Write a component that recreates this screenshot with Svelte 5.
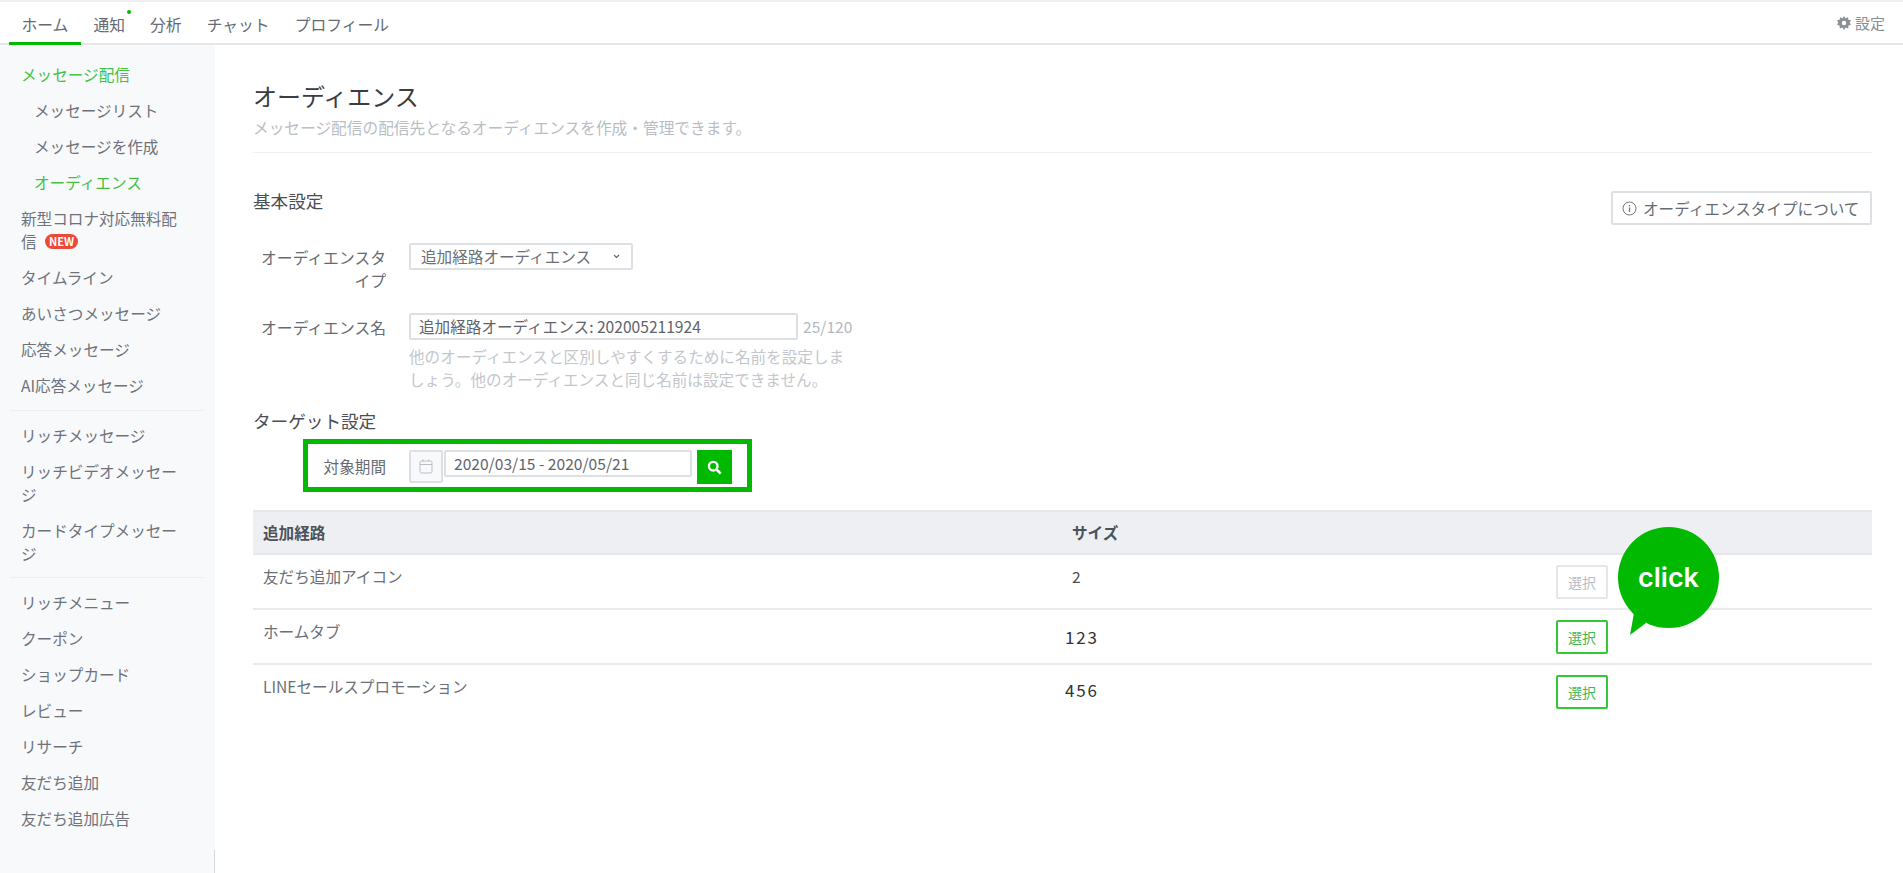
<script>
  const tabs = ["ホーム", "通知", "分析", "チャット", "プロフィール"];
  const navTop = [
    { label: "メッセージ配信", on: true },
    { label: "メッセージリスト", sub: true },
    { label: "メッセージを作成", sub: true },
    { label: "オーディエンス", sub: true, on: true },
    { label: "新型コロナ対応無料配信", badge: true },
    { label: "タイムライン" },
    { label: "あいさつメッセージ" },
    { label: "応答メッセージ" },
    { label: "AI応答メッセージ" }
  ];
  const navMid = ["リッチメッセージ", "リッチビデオメッセージ", "カードタイプメッセージ"];
  const navEnd = ["リッチメニュー", "クーポン", "ショップカード", "レビュー", "リサーチ", "友だち追加", "友だち追加広告"];
  const rows = [
    { name: "友だち追加アイコン", size: "2", off: true },
    { name: "ホームタブ", size: "123", edited: true },
    { name: "LINEセールスプロモーション", size: "456", edited: true, low: true }
  ];
</script>

<div class="page">
  <header class="top">
    <nav class="tabs">
      {#each tabs as tab, i}
        <span class="tab" class:active={i === 0}>
          {tab}
          {#if i === 1}<i class="dot"></i>{/if}
        </span>
      {/each}
    </nav>
    <span class="settings">
      <svg width="14" height="14" viewBox="0 0 14 14">
        <path fill="#8b9097" fill-rule="evenodd" d="M7 0l1.4 2.2L11 1.2l.3 2.6 2.7.4-1.3 2.3L14 8.8l-2.5.8-.3 2.8-2.6-1L7 14l-1.6-2.6-2.6 1-.3-2.8L0 8.8l1.3-2.3L0 4.2l2.7-.4.3-2.6 2.6 1zM7 4.8a2.2 2.2 0 1 0 0 4.4 2.2 2.2 0 0 0 0-4.4z"/>
      </svg>
      設定
    </span>
  </header>

  <div class="body">
    <aside class="side">
      {#each navTop as item}
        <div class="item" class:sub={item.sub} class:on={item.on}>
          {item.label}
          {#if item.badge}<span class="new">NEW</span>{/if}
        </div>
      {/each}
      <div class="sep first-sep"></div>
      {#each navMid as label}
        <div class="item">{label}</div>
      {/each}
      <div class="sep"></div>
      {#each navEnd as label}
        <div class="item">{label}</div>
      {/each}
      <div class="edge"></div>
    </aside>

    <main class="main">
      <h1>オーディエンス</h1>
      <p class="lead">メッセージ配信の配信先となるオーディエンスを作成・管理できます。</p>
      <hr />

      <div class="head-row">
        <h2>基本設定</h2>
        <button class="about">
          <svg width="15" height="15" viewBox="0 0 15 15">
            <circle cx="7.5" cy="7.5" r="6.5" fill="none" stroke="#777" />
            <path d="M7.5 6.5v4.5M7.5 4v1.4" stroke="#777" stroke-width="1.3" />
          </svg>
          オーディエンスタイプについて
        </button>
      </div>

      <div class="field first">
        <div class="label">オーディエンスタイプ</div>
        <div class="select">
          追加経路オーディエンス
          <svg width="7" height="5" viewBox="0 0 7 5">
            <path d="M1 1l2.5 2.5L6 1" fill="none" stroke="#666" stroke-width="1.2" />
          </svg>
        </div>
      </div>

      <div class="field second">
        <div class="label">オーディエンス名</div>
        <div>
          <div class="name-line">
            <div class="input name">追加経路オーディエンス: 202005211924</div>
            <span class="count">25/120</span>
          </div>
          <p class="help">他のオーディエンスと区別しやすくするために名前を設定しましょう。他のオーディエンスと同じ名前は設定できません。</p>
        </div>
      </div>

      <h2 class="target">ターゲット設定</h2>

      <div class="range">
        <div class="range-label">対象期間</div>
        <span class="cal">
          <svg width="14" height="15" viewBox="0 0 14 15">
            <rect x="1" y="2" width="12" height="12" rx="1.5" fill="none" stroke="#b9bec5" />
            <path d="M1 5.5h12M4 .5v2M10 .5v2" stroke="#b9bec5" />
          </svg>
        </span>
        <div class="input date">2020/03/15 - 2020/05/21</div>
        <span class="search">
          <svg width="15" height="15" viewBox="0 0 14 14">
            <circle cx="5.8" cy="5.8" r="4" fill="none" stroke="#fff" stroke-width="2.2" />
            <path d="M8.8 8.8l4 4" stroke="#fff" stroke-width="2.4" />
          </svg>
        </span>
      </div>

      <div class="table">
        <div class="thead">
          <div class="c1">追加経路</div>
          <div class="c2">サイズ</div>
        </div>
        {#each rows as row}
          <div class="tr">
            <div class="c1">{row.name}</div>
            <div class="c2" class:edited={row.edited} class:low={row.low}>{row.size}</div>
            <button class="pick" class:off={row.off}>選択</button>
          </div>
        {/each}
      </div>

      <div class="bubble">
        <svg width="102" height="110" viewBox="0 0 102 110">
          <circle cx="50.5" cy="50.5" r="50.5" fill="#00b900" />
          <path d="M16 86L12 108 28 96z" fill="#00b900" />
        </svg>
        <span>click</span>
      </div>
    </main>
  </div>
</div>

<style>
  :global(body) {
    background: #fff;
  }
  .page {
    height: 873px;
    overflow: hidden;
    font-family: "Noto Sans CJK JP", "Noto Sans", sans-serif;
    font-size: 15.6px;
    line-height: 23px;
    color: #6b7078;
  }
  .top {
    position: relative;
    z-index: 1;
    height: 45px;
    box-sizing: border-box;
    border-top: 2px solid #eceef0;
    border-bottom: 2px solid #e4e6ea;
    display: flex;
    justify-content: space-between;
    align-items: stretch;
    padding: 0 18px 0 9px;
  }
  .tabs {
    display: flex;
  }
  .tab {
    position: relative;
    box-sizing: border-box;
    height: 43px;
    padding: 11px 12.5px 0;
    font-size: 15.8px;
    color: #666b73;
  }
  .tab.active {
    border-bottom: 3px solid #00b900;
  }
  .dot {
    position: absolute;
    top: 8px;
    right: 7px;
    width: 4px;
    height: 4px;
    border-radius: 50%;
    background: #00b900;
  }
  .settings {
    display: flex;
    align-items: center;
    gap: 4px;
    color: #888d94;
    font-size: 15px;
  }
  .body {
    display: flex;
  }
  .side {
    position: relative;
    width: 215px;
    height: 828px;
    box-sizing: border-box;
    background: #f8f9fb;
    padding: 11px 11px 0 10px;
  }
  .item {
    padding: 6.5px 26px 6.5px 11px;
    color: #6e737b;
  }
  .item.sub {
    padding-left: 24px;
    padding-right: 0;
  }
  .item.on {
    color: #43c143;
  }
  .new {
    display: inline-block;
    vertical-align: 2px;
    margin-left: 5px;
    width: 33px;
    height: 15px;
    border-radius: 8px;
    background: #eb4a3a;
    color: #fff;
    font-size: 11px;
    font-weight: 700;
    line-height: 15px;
    text-align: center;
  }
  .sep {
    height: 1px;
    margin: 6px 0;
    background: #eceef1;
  }
  .first-sep {
    margin-top: 7px;
  }
  .edge {
    position: absolute;
    right: 0;
    bottom: 0;
    width: 1px;
    height: 23px;
    background: #d5d8dc;
  }
  .main {
    position: relative;
    width: 1619px;
    margin-left: 38px;
    padding-top: 34px;
  }
  h1 {
    margin: 0;
    font-size: 24px;
    font-weight: 400;
    line-height: 34px;
    color: #3a3d42;
  }
  .lead {
    margin: 3px 0 0;
    font-size: 15.7px;
    color: #b9bdc4;
  }
  hr {
    margin: 13px 0 0;
    border: 0;
    border-top: 1px solid #eff0f2;
  }
  h2 {
    margin: 0;
    font-size: 17.6px;
    font-weight: 400;
    color: #4a4e54;
  }
  .head-row {
    display: flex;
    justify-content: space-between;
    align-items: flex-start;
    margin-top: 36px;
  }
  .about {
    display: flex;
    align-items: center;
    gap: 6px;
    box-sizing: border-box;
    width: 261px;
    height: 34px;
    margin-top: 2px;
    padding: 0 0 0 9px;
    background: #fff;
    border: 2px solid #dcdfe4;
    border-radius: 2px;
    font: inherit;
    color: #666b73;
  }
  .field {
    display: flex;
  }
  .first {
    margin-top: 18px;
  }
  .second {
    margin-top: 21px;
  }
  .label {
    width: 133px;
    padding: 3px 23px 0 0;
    font-size: 15.8px;
    text-align: right;
    color: #666b73;
  }
  .select {
    display: flex;
    align-items: center;
    justify-content: space-between;
    box-sizing: border-box;
    width: 224px;
    height: 27px;
    padding: 0 11px 0 10px;
    border: 2px solid #dcdfe4;
    border-radius: 2px;
    color: #6b7078;
  }
  .input {
    box-sizing: border-box;
    height: 27px;
    padding: 0 8px;
    border: 2px solid #dcdfe4;
    border-radius: 2px;
    line-height: 22px;
    color: #5f646c;
  }
  .name-line {
    display: flex;
    align-items: center;
  }
  .name {
    width: 389px;
  }
  .count {
    margin-left: 5px;
    color: #b4b8bf;
  }
  .help {
    width: 446px;
    margin: 5px 0 0;
    color: #c3c7cd;
  }
  .target {
    margin-top: 18px;
  }
  .range {
    display: flex;
    align-items: flex-start;
    box-sizing: border-box;
    width: 449px;
    height: 53px;
    margin: 7px 0 0 50px;
    padding: 6px 0 0;
    border: 5px solid #00b900;
    color: #666b73;
  }
  .range-label {
    width: 78px;
    margin-right: 23px;
    padding-top: 5px;
    text-align: right;
  }
  .cal {
    display: flex;
    align-items: center;
    justify-content: center;
    box-sizing: border-box;
    width: 34px;
    height: 33px;
    background: #f8f9fb;
    border: 2px solid #dcdfe4;
    border-radius: 2px;
  }
  .date {
    width: 248px;
    margin-left: 1px;
  }
  .search {
    display: flex;
    align-items: center;
    justify-content: center;
    width: 35px;
    height: 34px;
    margin-left: 5px;
    background: #00b900;
  }
  .table {
    margin-top: 18px;
  }
  .thead {
    display: flex;
    box-sizing: border-box;
    height: 45px;
    padding-top: 9px;
    background: #edeff2;
    border-top: 2px solid #e4e7eb;
    border-bottom: 2px solid #e4e7eb;
    font-weight: 700;
    color: #4d5158;
  }
  .tr {
    display: flex;
    box-sizing: border-box;
    height: 55px;
    padding-top: 10px;
    border-bottom: 2px solid #e7e9ed;
    color: #6b7078;
  }
  .tr:last-child {
    border-bottom: 0;
  }
  .c1 {
    width: 809px;
    padding-left: 10px;
  }
  .c2 {
    width: 484px;
    color: #4a4e54;
  }
  .thead .c2 {
    color: #4d5158;
  }
  .edited {
    margin-left: -7px;
    margin-right: 7px;
    padding-top: 5px;
    font-size: 17px;
    letter-spacing: 1.8px;
    color: #333;
  }
  .low {
    padding-top: 3px;
  }
  .pick {
    box-sizing: border-box;
    width: 52px;
    height: 34px;
    padding: 0;
    background: #fff;
    border: 2px solid #36c736;
    border-radius: 2px;
    font: inherit;
    font-size: 14px;
    color: #43b84f;
  }
  .pick.off {
    border-color: #e4e6ea;
    color: #b9bdc4;
  }
  .bubble {
    position: absolute;
    left: 1365px;
    top: 482px;
    width: 102px;
    height: 110px;
  }
  .bubble svg {
    display: block;
  }
  .bubble span {
    position: absolute;
    left: 0;
    top: 0;
    width: 101px;
    height: 101px;
    display: flex;
    align-items: center;
    justify-content: center;
    font-family: Inter, sans-serif;
    font-size: 27px;
    font-weight: 600;
    color: #fff;
  }
</style>
